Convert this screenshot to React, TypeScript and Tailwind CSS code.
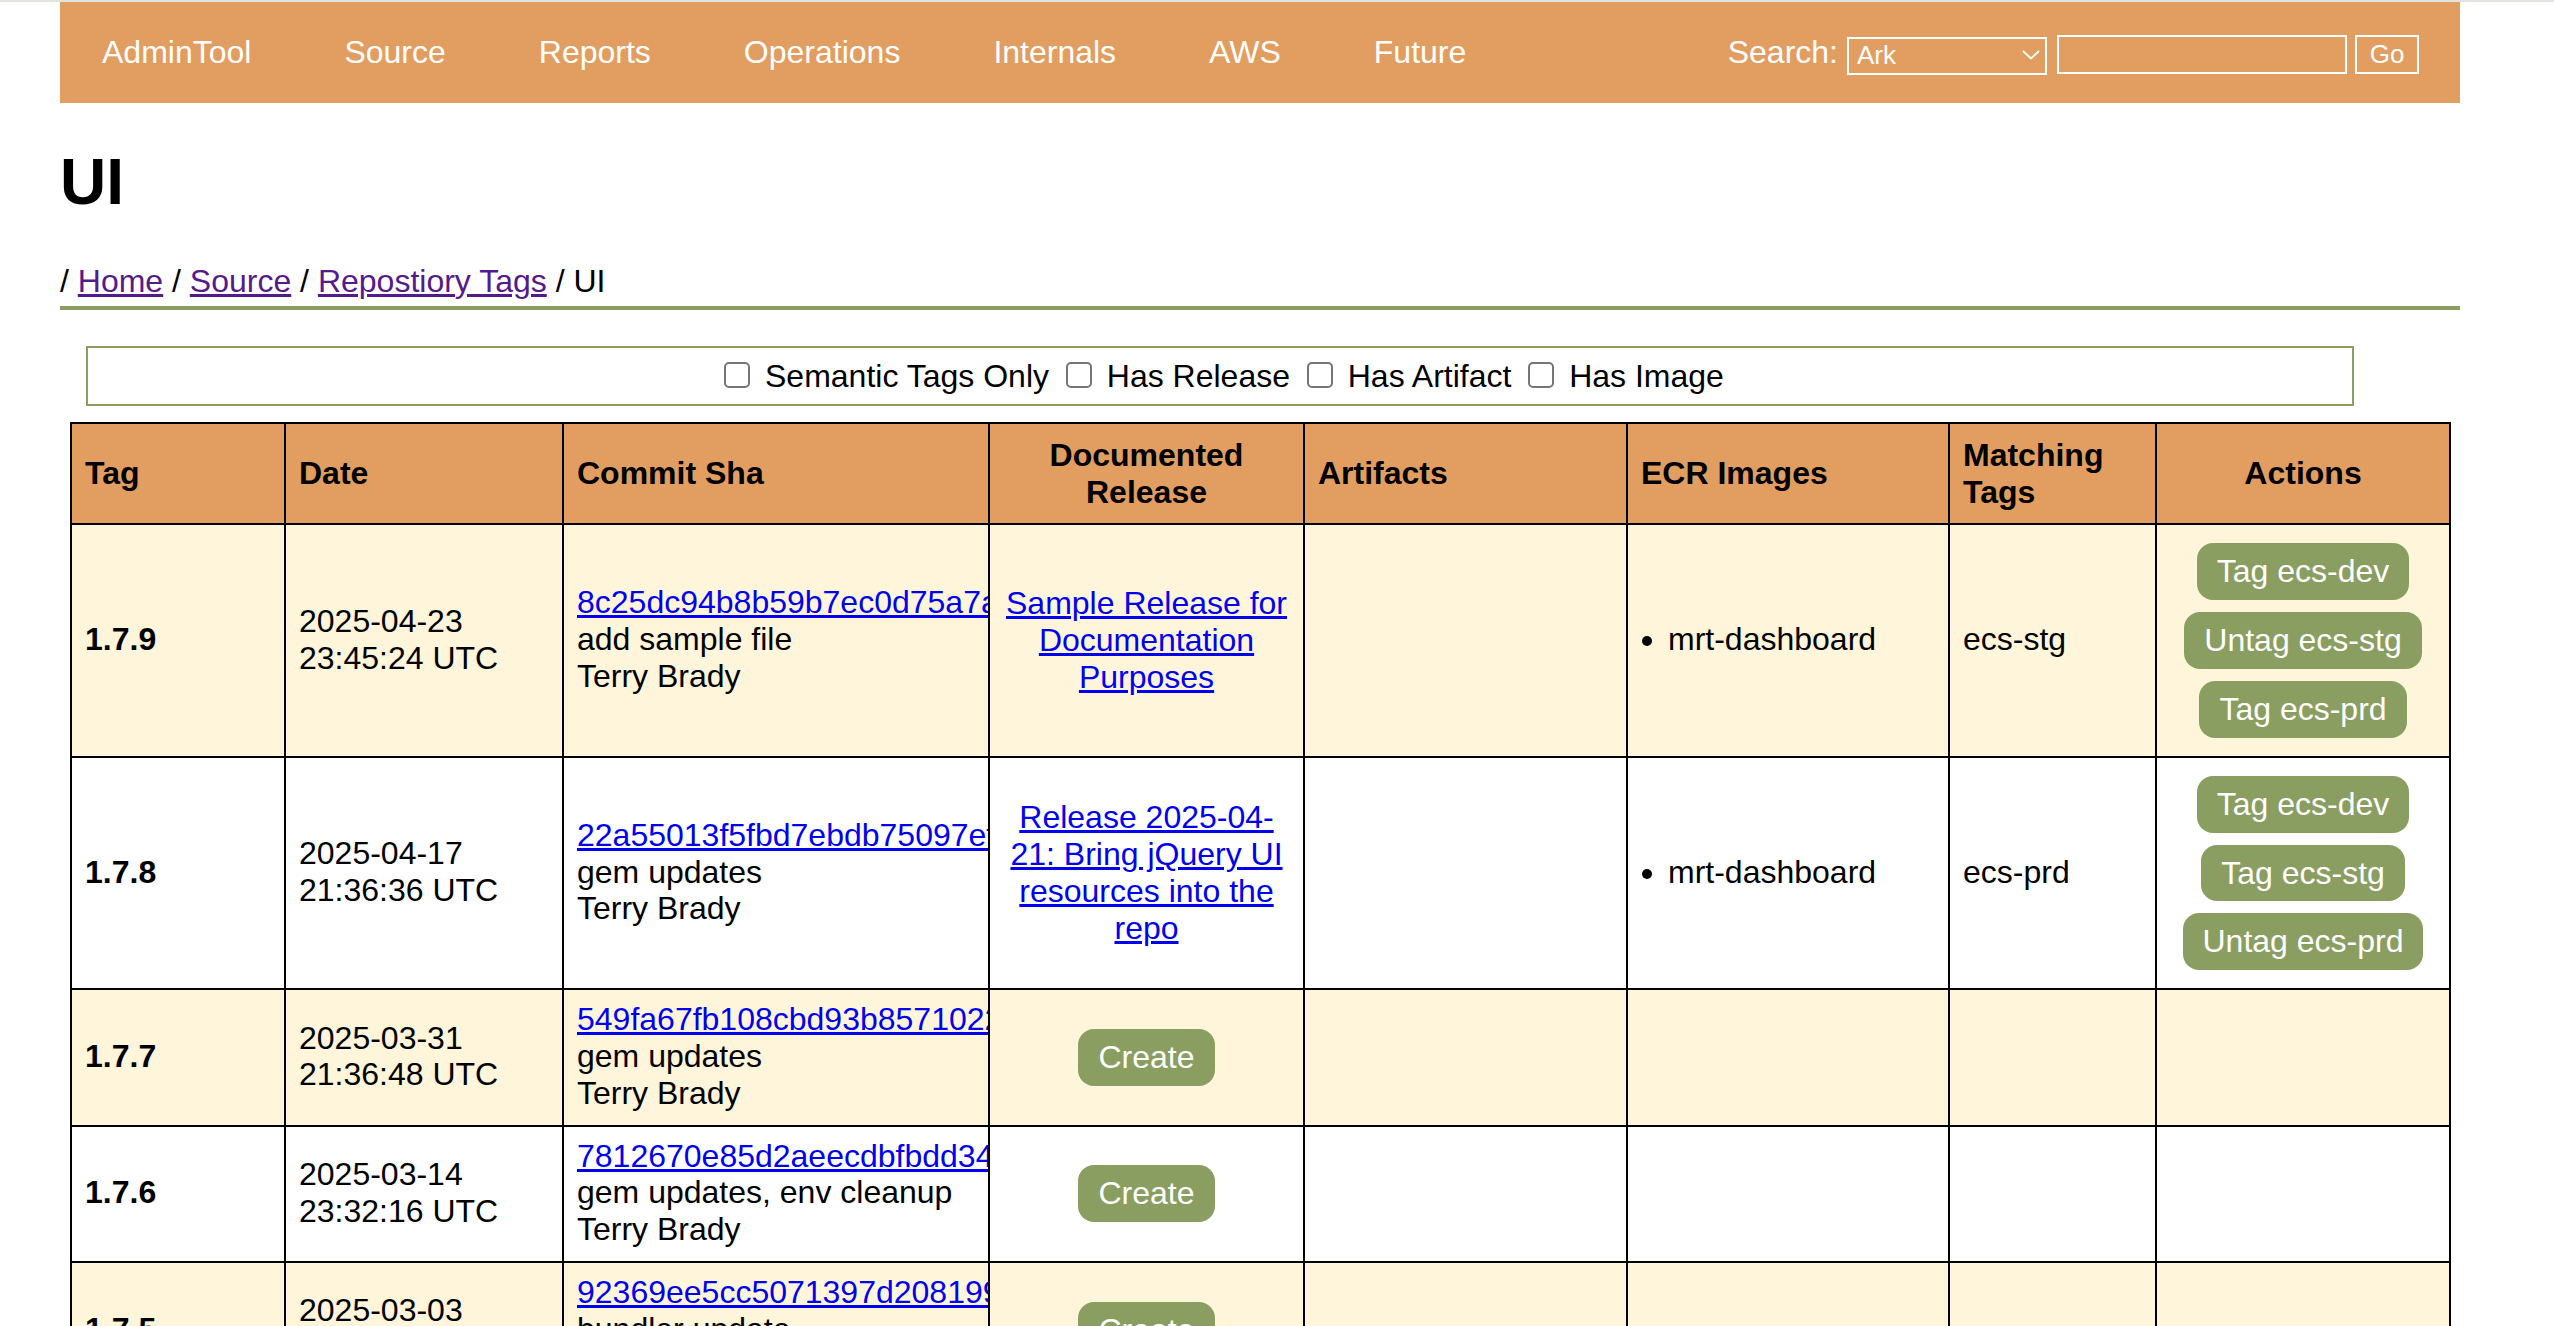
type Row = {
    tag: string;
    date: string;
    time: string;
    sha: string;
    message: string;
    release?: string;
    image?: string;
    matching?: string;
    actions: string[];
};

const rows: Row[] = [
    {
        tag: "1.7.9",
        date: "2025-04-23",
        time: "23:45:24 UTC",
        sha: "8c25dc94b8b59b7ec0d75a7a1e63f02c9ab4d718",
        message: "add sample file",
        release: "Sample Release for Documentation Purposes",
        image: "mrt-dashboard",
        matching: "ecs-stg",
        actions: ["Tag ecs-dev", "Untag ecs-stg", "Tag ecs-prd"],
    },
    {
        tag: "1.7.8",
        date: "2025-04-17",
        time: "21:36:36 UTC",
        sha: "22a55013f5fbd7ebdb75097ef4c10a86d3e2b97c",
        message: "gem updates",
        release: "Release 2025-04-21: Bring jQuery UI resources into the repo",
        image: "mrt-dashboard",
        matching: "ecs-prd",
        actions: ["Tag ecs-dev", "Tag ecs-stg", "Untag ecs-prd"],
    },
    {
        tag: "1.7.7",
        date: "2025-03-31",
        time: "21:36:48 UTC",
        sha: "549fa67fb108cbd93b85710223de61a0f47c9b15",
        message: "gem updates",
        actions: [],
    },
    {
        tag: "1.7.6",
        date: "2025-03-14",
        time: "23:32:16 UTC",
        sha: "7812670e85d2aeecdbfbdd34a90c7e16b25f83d4",
        message: "gem updates, env cleanup",
        actions: [],
    },
    {
        tag: "1.7.5",
        date: "2025-03-03",
        time: "22:14:09 UTC",
        sha: "92369ee5cc5071397d20819976ab3e40f1d8c25a",
        message: "bundler update",
        actions: [],
    },
];

const navItems = ["AdminTool", "Source", "Reports", "Operations", "Internals", "AWS", "Future"];
const filters = ["Semantic Tags Only", "Has Release", "Has Artifact", "Has Image"];

const thClass = "border-2 border-black bg-[#e19e60] py-[12px] align-middle font-bold";
const thLeft = `${thClass} pl-[13px] pr-[11px] text-left`;
const thCenter = `${thClass} px-[12px] text-center`;
// text sits a touch above the middle of the row
const tdClass = "border-2 border-black pl-[13px] pr-[11px] pt-[11px] pb-[13px] align-middle";
const tdCenter = "border-2 border-black px-[12px] py-[12px] text-center align-middle";
const linkClass = "text-[#0000ee] underline";
const crumbClass = "text-[#551a8b] underline";
const buttonClass = "inline-block rounded-[16px] bg-[#8a9e62] px-[20px] py-[10px] text-white";

export default function App() {
    return (
        <div className="h-screen w-full overflow-hidden bg-white font-['Liberation_Sans',Arial,sans-serif] text-[32px] leading-[1.15] text-black">
            <div className="h-[2px] bg-[#e3e3df]" />
            <div className="ml-[60px] w-[2400px]">
                {/* Top nav */}
                <nav className="flex h-[101px] items-start bg-[#e19e60] pl-[42px] pr-[41px] pt-[32px] text-white">
                    <div className="flex gap-[93px]">
                        {navItems.map((item) => (
                            <a key={item} href="#">
                                {item}
                            </a>
                        ))}
                    </div>
                    <div className="ml-auto flex items-start">
                        <span className="mr-[9px]">Search:</span>
                        <div className="relative mt-[1px] h-[38px] w-[200px]">
                            <select className="h-full w-full appearance-none border-2 border-white bg-transparent pl-[8px] text-[26px] text-white outline-none">
                                <option>Ark</option>
                            </select>
                            <svg
                                className="pointer-events-none absolute right-[7px] top-[15px] h-[10px] w-[18px]"
                                viewBox="0 0 18 10"
                                fill="none"
                                stroke="white"
                                strokeWidth="1.8"
                            >
                                <path d="M1 1l8 7.5L17 1" />
                            </svg>
                        </div>
                        <input className="ml-[10px] mt-[1px] h-[39px] w-[290px] border-2 border-white bg-transparent" />
                        <button className="ml-[8px] mt-[1px] h-[39px] w-[64px] border-2 border-white text-[26px] text-white">Go</button>
                    </div>
                </nav>

                <h1 className="mt-[43px] text-[64px] font-bold">UI</h1>

                {/* Breadcrumb */}
                <div className="mt-[43px] border-b-4 border-[#8a9e62] pb-[7px]">
                    /{" "}
                    <a href="#" className={crumbClass}>
                        Home
                    </a>{" "}
                    /{" "}
                    <a href="#" className={crumbClass}>
                        Source
                    </a>{" "}
                    /{" "}
                    <a href="#" className={crumbClass}>
                        Repostiory Tags
                    </a>{" "}
                    / UI
                </div>

                {/* Filters */}
                <div className="ml-[26px] mt-[36px] h-[60px] w-[2268px] border-2 border-[#8a9e62] pt-[10px] text-center">
                    {filters.map((filter) => (
                        <label key={filter}>
                            <input
                                type="checkbox"
                                className="ml-[8px] mr-[6px] inline-block h-[26px] w-[26px] appearance-none rounded-[5px] border-2 border-[#767676] bg-white align-[-1px]"
                            />{" "}
                            {filter}{" "}
                        </label>
                    ))}
                </div>

                {/* Tags table */}
                <table className="ml-[10px] mt-[16px] w-[2379px] table-fixed border-collapse">
                    <colgroup>
                        <col className="w-[214px]" />
                        <col className="w-[278px]" />
                        <col className="w-[426px]" />
                        <col className="w-[315px]" />
                        <col className="w-[323px]" />
                        <col className="w-[322px]" />
                        <col className="w-[207px]" />
                        <col className="w-[294px]" />
                    </colgroup>
                    <thead>
                        <tr className="h-[101px]">
                            <th className={thLeft}>Tag</th>
                            <th className={thLeft}>Date</th>
                            <th className={thLeft}>Commit Sha</th>
                            <th className={thCenter}>Documented Release</th>
                            <th className={thLeft}>Artifacts</th>
                            <th className={thLeft}>ECR Images</th>
                            <th className={thLeft}>Matching Tags</th>
                            <th className={thCenter}>Actions</th>
                        </tr>
                    </thead>
                    <tbody>
                        {rows.map((row, index) => (
                            <tr key={row.tag} className={index % 2 === 0 ? "bg-[#fff5da]" : "bg-white"}>
                                <td className={`${tdClass} font-bold`}>{row.tag}</td>
                                <td className={tdClass}>
                                    {row.date}
                                    <br />
                                    {row.time}
                                </td>
                                <td className={`${tdClass} overflow-hidden whitespace-nowrap`}>
                                    <a href="#" className={linkClass}>
                                        {row.sha}
                                    </a>
                                    <br />
                                    {row.message}
                                    <br />
                                    Terry Brady
                                </td>
                                <td className={tdCenter}>
                                    {row.release ? (
                                        <a href="#" className={linkClass}>
                                            {row.release}
                                        </a>
                                    ) : (
                                        <button className={buttonClass}>Create</button>
                                    )}
                                </td>
                                <td className={tdClass} />
                                <td className={tdClass}>
                                    {row.image && (
                                        <ul className="list-disc pl-[27px]">
                                            <li>{row.image}</li>
                                        </ul>
                                    )}
                                </td>
                                <td className={tdClass}>{row.matching}</td>
                                <td className={tdCenter}>
                                    <div className="flex flex-col items-center gap-[12px] py-[6px]">
                                        {row.actions.map((action) => (
                                            <button key={action} className={buttonClass}>
                                                {action}
                                            </button>
                                        ))}
                                    </div>
                                </td>
                            </tr>
                        ))}
                    </tbody>
                </table>
            </div>
        </div>
    );
}
